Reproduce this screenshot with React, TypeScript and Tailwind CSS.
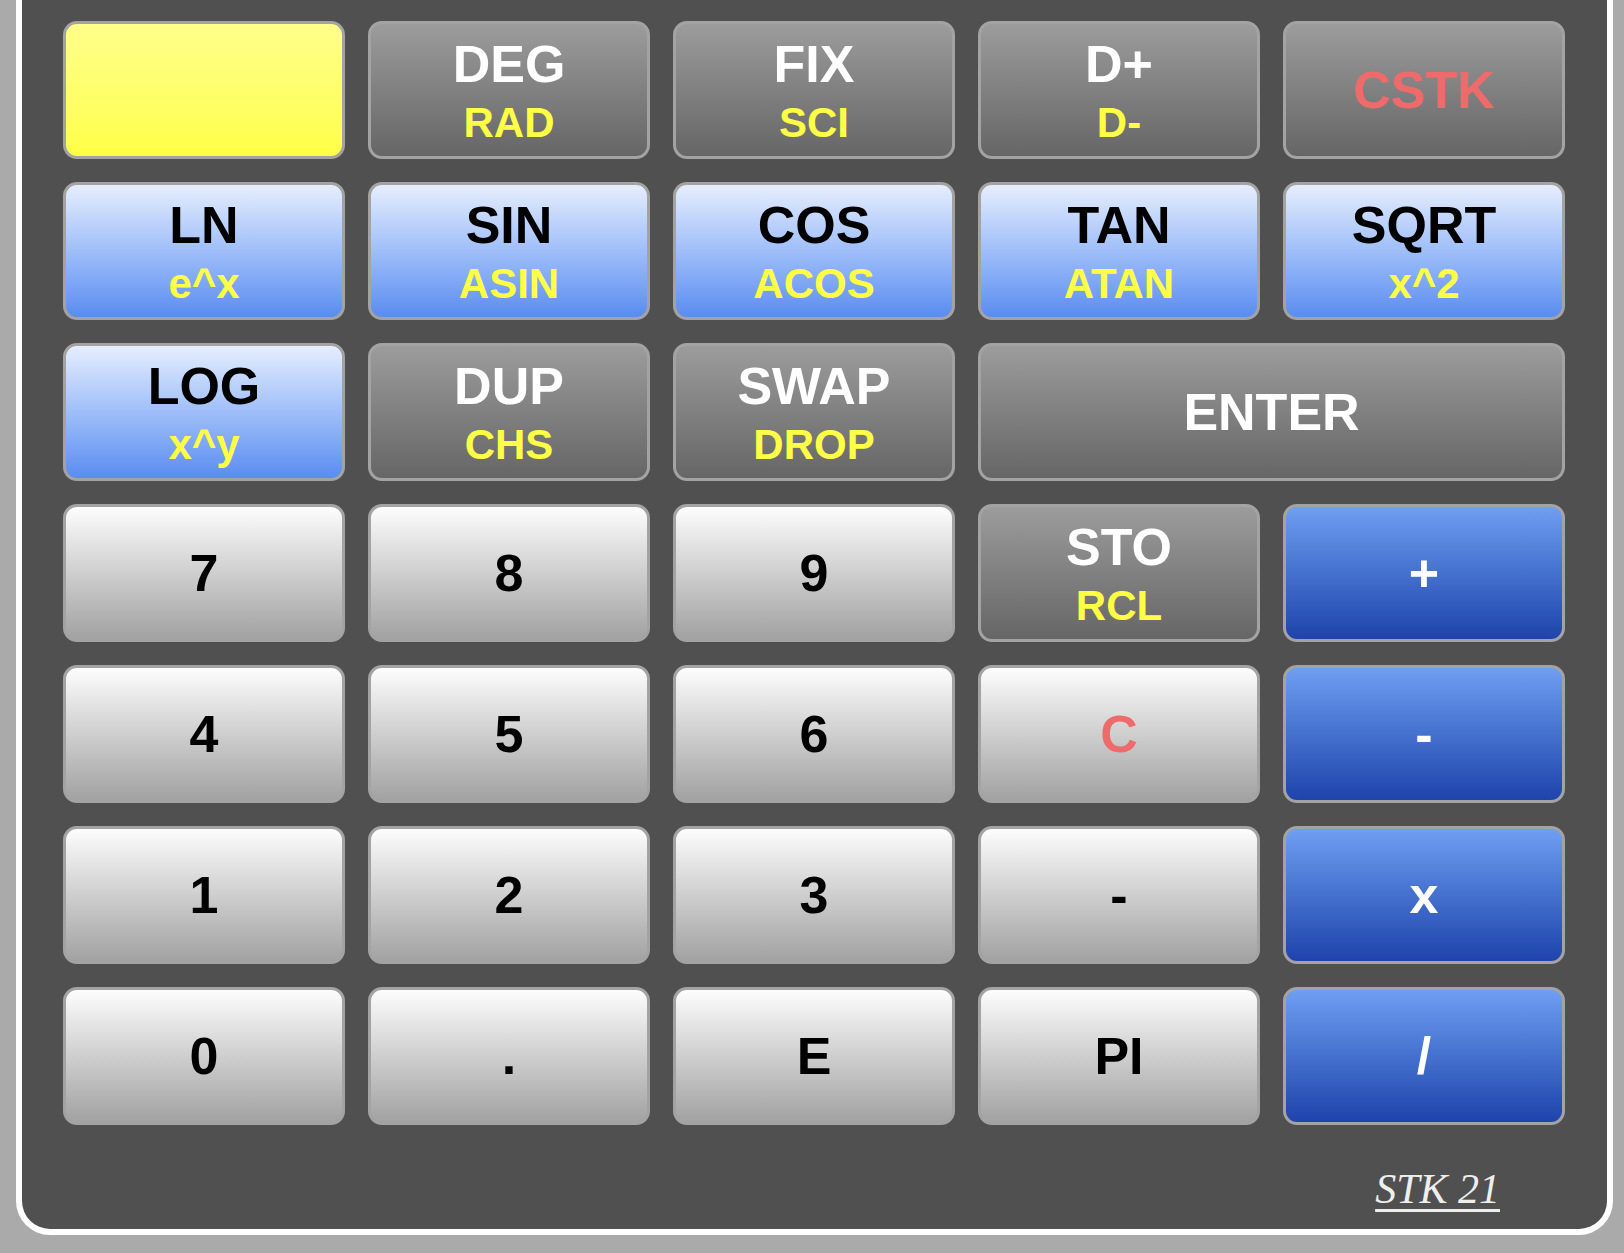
type Kind = "yellow" | "gray" | "sky" | "white" | "blue";

interface Key {
  top?: string;
  sub?: string;
  kind: Kind;
  red?: boolean;
  wide?: boolean;
}

const kindStyles: Record<Kind, string> = {
  yellow: "bg-gradient-to-b from-[#ffff8a] to-[#ffff44]",
  gray: "bg-gradient-to-b from-[#9c9c9c] to-[#666666]",
  sky: "bg-gradient-to-b from-[#e6eefd] to-[#5a8cf0]",
  white: "bg-gradient-to-b from-[#fdfdfd] to-[#a2a2a2]",
  blue: "bg-gradient-to-b from-[#6f9ef2] to-[#1f43ab]",
};

const keys: Key[] = [
  { kind: "yellow" },
  { top: "DEG", sub: "RAD", kind: "gray" },
  { top: "FIX", sub: "SCI", kind: "gray" },
  { top: "D+", sub: "D-", kind: "gray" },
  { top: "CSTK", kind: "gray", red: true },

  { top: "LN", sub: "e^x", kind: "sky" },
  { top: "SIN", sub: "ASIN", kind: "sky" },
  { top: "COS", sub: "ACOS", kind: "sky" },
  { top: "TAN", sub: "ATAN", kind: "sky" },
  { top: "SQRT", sub: "x^2", kind: "sky" },

  { top: "LOG", sub: "x^y", kind: "sky" },
  { top: "DUP", sub: "CHS", kind: "gray" },
  { top: "SWAP", sub: "DROP", kind: "gray" },
  { top: "ENTER", kind: "gray", wide: true },

  { top: "7", kind: "white" },
  { top: "8", kind: "white" },
  { top: "9", kind: "white" },
  { top: "STO", sub: "RCL", kind: "gray" },
  { top: "+", kind: "blue" },

  { top: "4", kind: "white" },
  { top: "5", kind: "white" },
  { top: "6", kind: "white" },
  { top: "C", kind: "white", red: true },
  { top: "-", kind: "blue" },

  { top: "1", kind: "white" },
  { top: "2", kind: "white" },
  { top: "3", kind: "white" },
  { top: "-", kind: "white" },
  { top: "x", kind: "blue" },

  { top: "0", kind: "white" },
  { top: ".", kind: "white" },
  { top: "E", kind: "white" },
  { top: "PI", kind: "white" },
  { top: "/", kind: "blue" },
];

function CalcKey({ k }: { k: Key }) {
  const dark = k.kind === "sky" || k.kind === "white" || k.kind === "yellow";
  const topColor = k.red ? "text-[#ef6b6b]" : dark ? "text-black" : "text-white";

  return (
    <button
      className={`${kindStyles[k.kind]} ${k.wide ? "col-span-2" : ""} h-[138px] rounded-[14px] border-[3px] border-[#a3a3a3] flex flex-col items-center justify-center ${
        k.sub ? "gap-[12px] pt-[2px]" : ""
      }`}
    >
      {k.top && <span className={`${topColor} text-[52px] leading-none font-bold`}>{k.top}</span>}
      {k.sub && <span className="text-[#ffff46] text-[42px] leading-none font-bold">{k.sub}</span>}
    </button>
  );
}

export default function App() {
  return (
    <div className="w-full h-[1253px] bg-[#aaaaaa] overflow-hidden font-['Liberation_Sans',Arial,sans-serif]">
      <div className="ml-[16px] w-[1597px] h-[1235px] bg-[#505050] border-x-[6px] border-b-[6px] border-white rounded-b-[34px] flex flex-col">
        <div className="pt-[21px] pl-[41px] grid grid-cols-[repeat(5,282px)] gap-[23px]">
          {keys.map((k, i) => (
            <CalcKey key={i} k={k} />
          ))}
        </div>
        <div className="mt-[43px] flex justify-end pr-[107px]">
          <span className="text-[#eeeeee] text-[42px] leading-none italic underline decoration-[3px] underline-offset-[6px] font-['Liberation_Serif','Times_New_Roman',serif]">
            STK 21
          </span>
        </div>
      </div>
    </div>
  );
}
